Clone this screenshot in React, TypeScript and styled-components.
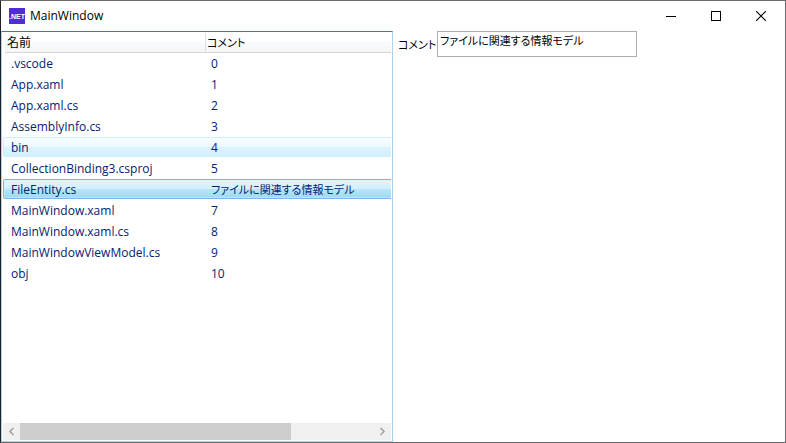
import React, { useState } from "react";
import styled, { createGlobalStyle, css } from "styled-components";

const GlobalStyle = createGlobalStyle`
  *, *::before, *::after { box-sizing: border-box; }
  body {
    margin: 0;
    background: #fff;
    color: #000;
    font: 12px/16px "Open Sans", "Noto Sans CJK JP", sans-serif;
    font-feature-settings: "palt";
  }
  button, textarea { font: inherit; font-feature-settings: inherit; color: inherit; }
`;

const Window = styled.div`
  display: flex;
  flex-direction: column;
  min-height: 100vh;
  border: 1px solid #6b6b6d;
  border-left-color: #222226;
  background: #fff;
`;

const TitleBar = styled.header`
  display: flex;
  align-items: center;
  height: 30px;
  padding: 0 2px 0 8px;
`;

const Title = styled.h1`
  flex: 1;
  margin: 0 0 0 5px;
  font-size: 12px;
  font-weight: 400;
`;

const CaptionButton = styled.button`
  display: grid;
  place-items: center;
  width: 45px;
  height: 28px;
  padding: 0;
  border: 0;
  background: transparent;
  &:hover { background: #e5e5e5; }
`;

const Content = styled.main`
  flex: 1;
  display: grid;
  grid-template-columns: 1fr 1fr;
`;

const ListPanel = styled.section`
  display: flex;
  flex-direction: column;
  min-width: 0;
  padding: 1px;
  border: 1px solid #abd3ea;
  border-top-color: #3d7bad;
`;

const Viewport = styled.div`
  flex: 1;
  overflow: hidden;
`;

const FileTable = styled.table`
  display: block;
  width: 130%;
`;

const TableHead = styled.thead`
  display: block;
`;

const TableBody = styled.tbody`
  display: block;
`;

const HeaderRow = styled.tr`
  display: grid;
  grid-template-columns: 201px 1fr;
  height: 20px;
  margin-left: 2px;
  border-bottom: 1px solid #d5d5d5;
  background: linear-gradient(#fff 0 40%, #fafbfc 42%, #f5f6f8);
`;

const HeaderCell = styled.th<{ $kana?: boolean }>`
  padding: ${({ $kana }) => ($kana ? "2px 1px" : "2px")};
  border-right: 1px solid #dcdde0;
  font-size: ${({ $kana }) => ($kana ? 11 : 12)}px;
  font-weight: 400;
  text-align: left;
`;

type RowState = "normal" | "hover" | "selected";

const hoverLook = css`
  border-color: #cdeffc;
  background: linear-gradient(#f6fcff 0 15%, #ebf9fe 48%, #dcf3fd 52%, #d2f0fd);
`;

const selectedLook = css`
  border-color: #78b7ec;
  background: linear-gradient(#e3f5fc, #d2effc 48%, #b9e5fa 52%, #98daf8);
  box-shadow: inset 0 0 0 1px #d2f1fc80;
`;

const FileRow = styled.tr<{ $state: RowState }>`
  display: grid;
  grid-template-columns: 200px 1fr;
  height: 20px;
  margin-bottom: 1px;
  border: 1px solid transparent;
  border-radius: 2px;
  color: #042271;
  cursor: default;
  &:hover { ${hoverLook} }
  ${({ $state }) => $state === "hover" && hoverLook}
  ${({ $state }) => $state === "selected" && css`&, &:hover { ${selectedLook} }`}
`;

const Cell = styled.td<{ $kana?: boolean }>`
  padding: 2px 7px 0;
  font-size: ${({ $kana }) => ($kana ? 11 : 12)}px;
  white-space: nowrap;
`;

const ScrollBar = styled.div`
  display: flex;
  height: 17px;
  background: #f0f0f0;
`;

const ScrollButton = styled.button`
  display: grid;
  place-items: center;
  width: 17px;
  padding: 0;
  border: 0;
  background: transparent;
`;

const Track = styled.div`
  flex: 1;
`;

const Thumb = styled.div`
  width: 76.5%;
  height: 100%;
  background: #cdcdcd;
`;

const Editor = styled.section`
  display: flex;
  align-items: flex-start;
  padding-left: 5px;
`;

const EditorLabel = styled.label`
  width: 39px;
  padding-top: 6px;
  font-size: 11px;
  white-space: nowrap;
`;

const CommentBox = styled.textarea`
  width: 200px;
  height: 26px;
  padding: 1px 2px;
  border: 1px solid #abadb3;
  outline: 0;
  background: #fff;
  font-size: 11px;
  resize: none;
  overflow: hidden;
`;

const initialFiles = [
  { name: ".vscode", comment: "0" },
  { name: "App.xaml", comment: "1" },
  { name: "App.xaml.cs", comment: "2" },
  { name: "AssemblyInfo.cs", comment: "3" },
  { name: "bin", comment: "4" },
  { name: "CollectionBinding3.csproj", comment: "5" },
  { name: "FileEntity.cs", comment: "ファイルに関連する情報モデル" },
  { name: "MainWindow.xaml", comment: "7" },
  { name: "MainWindow.xaml.cs", comment: "8" },
  { name: "MainWindowViewModel.cs", comment: "9" },
  { name: "obj", comment: "10" },
];

const hasKana = (text: string) => /[\u3040-\u30ff]/.test(text);

const AppIcon = () => (
  <svg width="16" height="16" viewBox="0 0 16 16" aria-hidden="true">
    <rect width="16" height="16" fill="#512bd4" />
    <text x="8" y="11" fill="#fff" fontSize="7" fontWeight="700" textAnchor="middle" fontFamily="Liberation Sans, sans-serif">
      .NET
    </text>
  </svg>
);

const Arrow = ({ d }: { d: string }) => (
  <svg width="7" height="9" viewBox="0 0 7 9" fill="none" stroke="#a0a0a0" strokeWidth="1.5">
    <path d={d} />
  </svg>
);

export default function App() {
  const [files, setFiles] = useState(initialFiles);
  const [selected, setSelected] = useState(6);
  const [hovered, setHovered] = useState(4);

  const stateOf = (i: number): RowState =>
    i === selected ? "selected" : i === hovered ? "hover" : "normal";

  const editComment = (comment: string) =>
    setFiles(files.map((f, i) => (i === selected ? { ...f, comment } : f)));

  return (
    <>
      <GlobalStyle />
      <Window>
        <TitleBar>
          <AppIcon />
          <Title>MainWindow</Title>
          <CaptionButton aria-label="Minimize">
            <svg width="10" height="10" shapeRendering="crispEdges"><path d="M0 5.5H10" stroke="#000" /></svg>
          </CaptionButton>
          <CaptionButton aria-label="Maximize">
            <svg width="10" height="10" shapeRendering="crispEdges">
              <rect x="0.5" y="0.5" width="9" height="9" fill="none" stroke="#000" />
            </svg>
          </CaptionButton>
          <CaptionButton aria-label="Close">
            <svg width="10" height="10"><path d="M0 0L10 10M10 0L0 10" stroke="#000" strokeWidth="1.1" /></svg>
          </CaptionButton>
        </TitleBar>
        <Content>
          <ListPanel>
            <Viewport>
              <FileTable>
                <TableHead>
                  <HeaderRow>
                    <HeaderCell scope="col">名前</HeaderCell>
                    <HeaderCell scope="col" $kana>コメント</HeaderCell>
                  </HeaderRow>
                </TableHead>
                <TableBody>
                  {files.map((file, i) => (
                    <FileRow
                      key={file.name}
                      $state={stateOf(i)}
                      aria-selected={i === selected}
                      onClick={() => setSelected(i)}
                      onMouseEnter={() => setHovered(i)}
                    >
                      <Cell>{file.name}</Cell>
                      <Cell $kana={hasKana(file.comment)}>{file.comment}</Cell>
                    </FileRow>
                  ))}
                </TableBody>
              </FileTable>
            </Viewport>
            <ScrollBar>
              <ScrollButton aria-label="Scroll left"><Arrow d="M5.5 1L2 4.5L5.5 8" /></ScrollButton>
              <Track><Thumb /></Track>
              <ScrollButton aria-label="Scroll right"><Arrow d="M1.5 1L5 4.5L1.5 8" /></ScrollButton>
            </ScrollBar>
          </ListPanel>
          <Editor>
            <EditorLabel htmlFor="comment">コメント</EditorLabel>
            <CommentBox
              id="comment"
              rows={1}
              spellCheck={false}
              value={files[selected].comment}
              onChange={(e) => editComment(e.target.value)}
            />
          </Editor>
        </Content>
      </Window>
    </>
  );
}
